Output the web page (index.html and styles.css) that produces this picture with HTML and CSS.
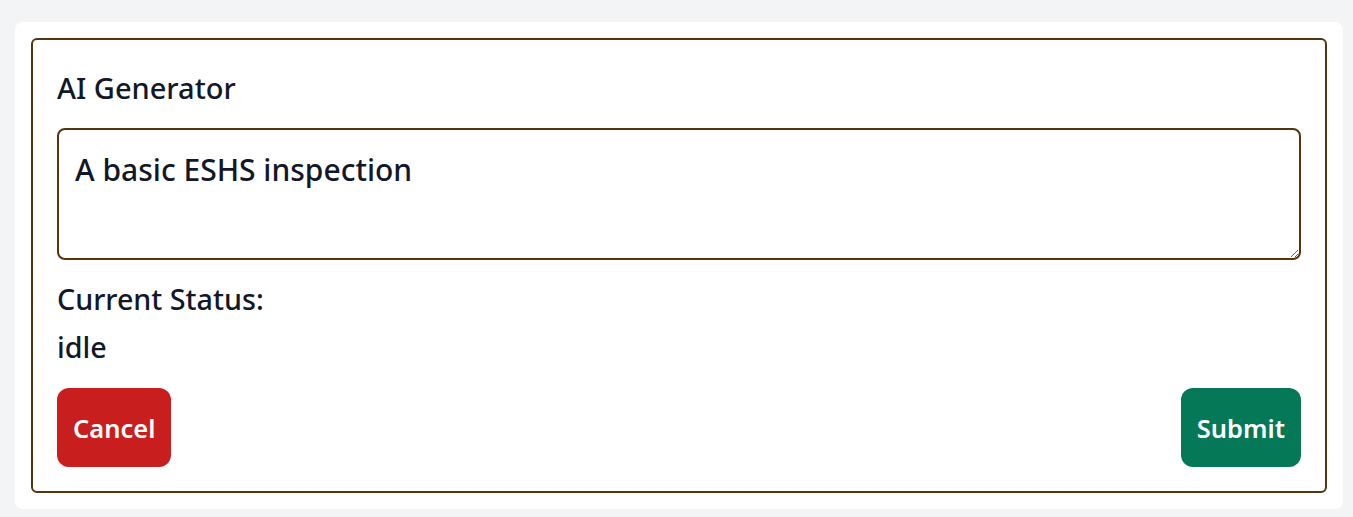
FILE: index.html
```html
<!DOCTYPE html>
<html lang="en">
<head>
<meta charset="utf-8">
<title>AI Generator</title>
<link rel="stylesheet" href="styles.css">
</head>
<body>
<main class="card">
  <section class="generator">
    <h2 class="title">AI Generator</h2>
    <textarea class="prompt" rows="2">A basic ESHS inspection</textarea>
    <div class="status">
      <div class="status-label">Current Status:</div>
      <div class="status-value">idle</div>
    </div>
    <div class="actions">
      <button class="btn btn-cancel" type="button">Cancel</button>
      <button class="btn btn-submit" type="button">Submit</button>
    </div>
  </section>
</main>
</body>
</html>
```
FILE: styles.css
```css
* { box-sizing: border-box; }
html, body { height: 100%; }
body {
  margin: 0;
  padding: 22px 10px 7px 15px;
  background: #f3f4f6;
  font-family: "Noto Sans", "Open Sans", sans-serif;
  color: #111827;
}
.card {
  background: #ffffff;
  border-radius: 8px;
  padding: 16px;
}
.generator {
  border: 2px solid #55340f;
  border-radius: 6px;
  padding: 24px;
  display: flex;
  flex-direction: column;
}
.title {
  margin: 0 0 16px;
  font-size: 29px;
  line-height: 48px;
  font-weight: 500;
}
.prompt {
  display: block;
  width: 100%;
  height: 132px;
  margin: 0;
  padding: 16px;
  border: 2px solid #55340f;
  border-radius: 8px;
  font-family: inherit;
  font-size: 30px;
  line-height: 48px;
  font-weight: 500;
  color: #111827;
  background: #fff;
  resize: vertical;
  outline: none;
}
.status {
  margin-top: 15px;
  font-size: 28.7px;
  line-height: 48px;
  font-weight: 500;
}
.actions {
  margin-top: 17px;
  display: flex;
  justify-content: space-between;
  align-items: center;
}
.btn {
  height: 79px;
  padding: 0 16px;
  border: none;
  border-radius: 12px;
  font-family: inherit;
  font-size: 25.5px;
  font-weight: 600;
  color: #ffffff;
  cursor: pointer;
}
.btn-cancel { background: #c81e1e; }
.btn-submit { background: #047857; }
```
